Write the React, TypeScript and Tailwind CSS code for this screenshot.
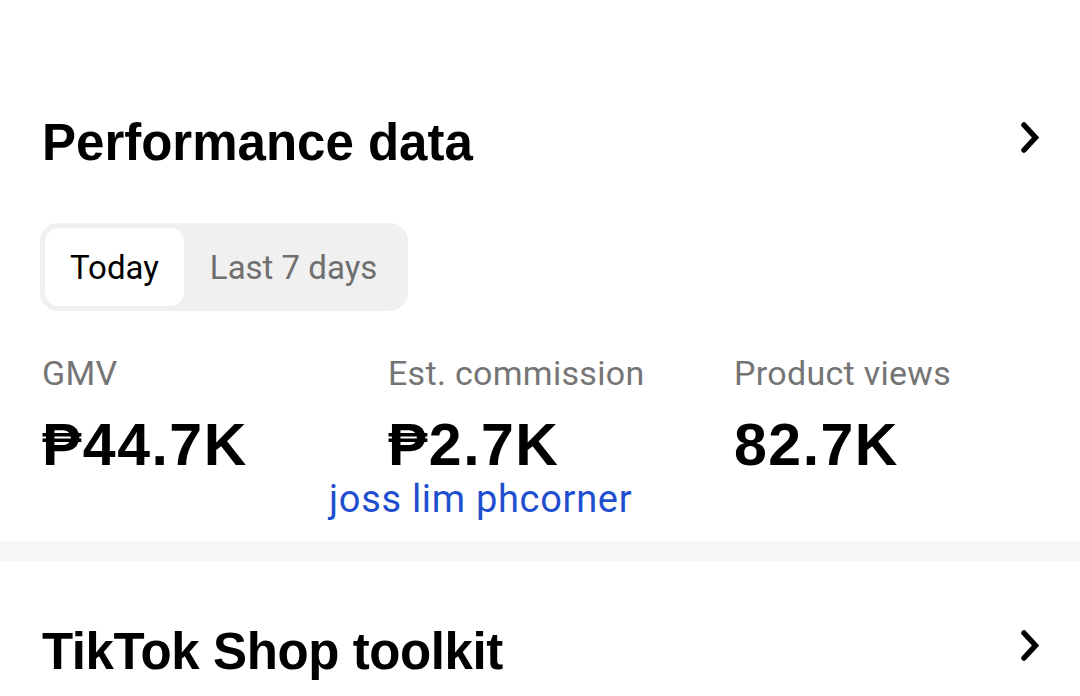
const heading = "font-['Liberation_Sans','DejaVu_Sans',sans-serif]"
const body = "font-['Roboto','Noto_Sans',sans-serif]"

function Chevron() {
  return (
    <svg className="w-[30px] h-[40px] -mt-[12px]" viewBox="0 0 30 40" fill="none">
      <path d="M10 8 L21.5 20.5 L10 33" stroke="#000" strokeWidth="5.5" strokeLinecap="round" strokeLinejoin="miter" />
    </svg>
  )
}

type Stat = { label: string; value: string }

const stats: Stat[] = [
  { label: "GMV", value: "₱44.7K" },
  { label: "Est. commission", value: "₱2.7K" },
  { label: "Product views", value: "82.7K" },
]

export default function App() {
  return (
    <div className="w-[1080px] h-[696px] bg-white overflow-hidden flex flex-col">
      <div className="h-[98px]" />

      {/* Performance data */}
      <div className="flex items-center justify-between h-[90px] pl-[42px] pr-[36px]">
        <h1 className={`${heading} text-[51px] leading-none font-bold text-black`}>Performance data</h1>
        <Chevron />
      </div>

      <div className="pl-[40px] mt-[36px]">
        <div className="inline-flex items-center h-[88px] p-[5px] bg-[#f0f0f0] rounded-[18px]">
          <button className={`${body} h-full px-[25px] bg-white rounded-[14px] text-[33px] text-black`}>Today</button>
          <button className={`${body} h-full px-[26px] text-[33px] text-[#6f6f6f]`}>Last 7 days</button>
        </div>
      </div>

      <div className="flex pl-[42px] mt-[42px]">
        {stats.map((s) => (
          <div key={s.label} className="w-[346px] flex flex-col">
            <div className={`${body} h-[40px] flex items-center text-[34px] text-[#757575] tracking-[0.3px]`}>{s.label}</div>
            <div className={`${heading} h-[64px] mt-[20px] flex items-center text-[59px] font-bold text-black leading-none tracking-[1.5px]`}>
              {s.value}
            </div>
          </div>
        ))}
      </div>

      <div className={`${body} h-[40px] mt-[2px] pl-[329px] flex items-center text-[38px] text-[#1f4fcf] leading-none tracking-[0.7px]`}>
        joss lim phcorner
      </div>

      <div className="h-[20px] mt-[22px] bg-[#f6f6f6]" />

      {/* TikTok Shop toolkit */}
      <div className="flex items-center justify-between h-[90px] mt-[45px] pl-[42px] pr-[36px]">
        <h2 className={`${heading} text-[51px] leading-none font-bold text-black tracking-[-0.4px]`}>TikTok Shop toolkit</h2>
        <Chevron />
      </div>
    </div>
  )
}
